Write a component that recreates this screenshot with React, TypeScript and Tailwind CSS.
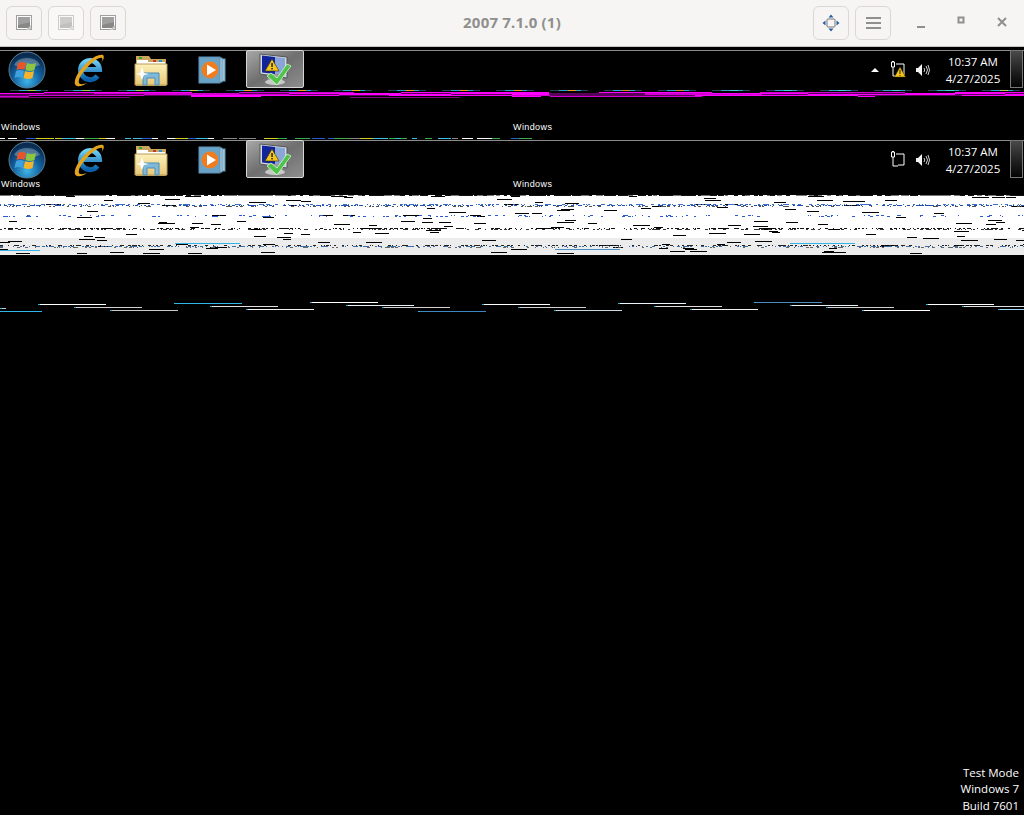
import React from "react";

// seeded noise so the glitch bands stay the same on each render
function rng(seed: number) {
  let s = seed;
  return () => {
    s = (s * 16807) % 2147483647;
    return s / 2147483647;
  };
}

function HeaderIcon({ dim }: { dim?: boolean }) {
  return (
    <svg width="16" height="16" viewBox="0 0 16 16" className={dim ? "opacity-40" : "opacity-80"}>
      <rect x="0.5" y="0.5" width="15" height="14" fill="#fff" stroke="#8a8a8a" />
      <rect x="2" y="2" width="12" height="11" fill="#6e6e6e" />
      <path d="M2 2h12v5L2 10z" fill="#8c8c8c" />
      <path d="M10 15l5-5v3l-2 2z" fill="#bbb" />
    </svg>
  );
}

function HeaderBtn({ children, dim }: { children: React.ReactNode; dim?: boolean }) {
  return (
    <div className={`w-9 h-[34px] rounded-[6px] border border-[#dbd8d3] flex items-center justify-center ${dim ? "bg-[#f9f8f7]" : "bg-[#f6f5f4]"}`}>
      {children}
    </div>
  );
}

function TitleBar() {
  return (
    <div className="h-[47px] shrink-0 bg-[#f6f5f4] border-b border-[#c8c5c0] grid grid-cols-[1fr_auto_1fr] items-center pb-[1px]">
      <div className="flex gap-[6px] pl-[6px]">
        <HeaderBtn><HeaderIcon /></HeaderBtn>
        <HeaderBtn dim><HeaderIcon dim /></HeaderBtn>
        <HeaderBtn><HeaderIcon /></HeaderBtn>
      </div>
      <div className="text-center font-['Noto_Sans',sans-serif] font-bold text-[15px] tracking-[0.2px] text-[#8f8f8d]">2007 7.1.0 (1)</div>
      <div className="flex justify-end items-center">
        <div className="flex gap-[6px]">
          <HeaderBtn>
            <svg width="18" height="18" viewBox="0 0 18 18">
              <rect x="5" y="5" width="8" height="8" rx="1" fill="#f6f5f4" stroke="#777" />
              <path d="M9 0.5l2.5 3h-5zM9 17.5l2.5-3h-5zM0.5 9l3-2.5v5zM17.5 9l-3-2.5v5z" fill="#2a5c9e" />
            </svg>
          </HeaderBtn>
          <HeaderBtn>
            <div className="flex flex-col gap-[3px]">
              <div className="w-[15px] h-[2px] bg-[#8f8f8d]" />
              <div className="w-[15px] h-[2px] bg-[#8f8f8d]" />
              <div className="w-[15px] h-[2px] bg-[#8f8f8d]" />
            </div>
          </HeaderBtn>
        </div>
        <div className="w-[133px] flex items-center pl-[25px] gap-[27px]">
          <svg width="13" height="13" viewBox="0 0 13 13"><rect x="1" y="10" width="8" height="2" fill="#8f8f8d" /></svg>
          <svg width="13" height="13" viewBox="0 0 13 13"><rect x="2.5" y="1.5" width="5" height="5" fill="none" stroke="#8f8f8d" strokeWidth="2" /></svg>
          <svg width="13" height="13" viewBox="0 0 13 13"><path d="M2 2l8 8M10 2l-8 8" stroke="#8f8f8d" strokeWidth="2" /></svg>
        </div>
      </div>
    </div>
  );
}

function StartOrb() {
  return (
    <svg width="38" height="38" viewBox="0 0 38 38">
      <defs>
        <radialGradient id="orb" cx="50%" cy="80%" r="70%">
          <stop offset="0" stopColor="#3fb4e8" />
          <stop offset="0.55" stopColor="#13609e" />
          <stop offset="1" stopColor="#0b2c50" />
        </radialGradient>
      </defs>
      <circle cx="19" cy="19" r="18" fill="url(#orb)" stroke="#5a7f96" />
      <path d="M6 14a14 11 0 0 1 26 0q-13 6-26 0z" fill="#fff" opacity="0.28" />
      <path d="M10 12q4-2 8 0l-1.500 7q-4-2-8 0z" fill="#e8552a" />
      <path d="M19 12q4 2 9 0l-1.500 7q-4 2-9 0z" fill="#8cc63f" />
      <path d="M8 20q4-2 8 0l-1.500 7q-4-2-8 0z" fill="#3fa0e0" />
      <path d="M17 20q4 2 9 0l-1.500 7q-4 2-9 0z" fill="#f7b32b" />
    </svg>
  );
}

function IeIcon() {
  return (
    <svg width="34" height="34" viewBox="0 0 34 34">
      <defs>
        <linearGradient id="ie" x1="0" y1="0" x2="0" y2="1">
          <stop offset="0" stopColor="#6fd0f5" />
          <stop offset="1" stopColor="#0a5fa8" />
        </linearGradient>
      </defs>
      <path d="M10 16.500h17.500A9.500 9.500 0 1 0 25.500 23" fill="none" stroke="url(#ie)" strokeWidth="5" />
      <path d="M31 2C25 0 12 10 5 22c-3 6-3 10 0 11 3 1 7-1 10-3-3 1-7 2-8 0-1-3 2-9 7-14C20 9 27 4 30 5c1 1 0 4-2 6 3-3 5-7 3-9z" fill="#e3a51f" />
    </svg>
  );
}

function FolderIcon() {
  return (
    <svg width="34" height="34" viewBox="0 0 34 34">
      <defs>
        <linearGradient id="fld" x1="0" y1="0" x2="0" y2="1">
          <stop offset="0" stopColor="#fdf0b8" />
          <stop offset="1" stopColor="#e9c878" />
        </linearGradient>
      </defs>
      <path d="M2 3h13l2 3h15v27H2z" fill="#c9a65c" />
      <rect x="5" y="4" width="3" height="2" fill="#3ba53b" />
      <rect x="19" y="7" width="3" height="2" fill="#c8382a" />
      <rect x="25" y="7" width="3" height="2" fill="#2a8fd8" />
      <path d="M3 7h11v2h17v2H3z" fill="#fff" />
      <path d="M1 11h32v21H1z" fill="url(#fld)" stroke="#b99a58" />
      <path d="M9 20h16v12h-4v-7h-8v7H9z" fill="#7fb8d8" stroke="#4d8db5" />
      <path d="M6 20l2-6 2 6 5 1-5 1-2 5-2-5-4-1z" fill="#fff" />
    </svg>
  );
}

function MediaIcon() {
  return (
    <svg width="28" height="28" viewBox="0 0 28 28">
      <rect x="6" y="3" width="21" height="22" fill="#9cc4dc" stroke="#6a9bb8" />
      <rect x="3" y="2" width="21" height="24" fill="#b8d6e8" stroke="#6a9bb8" />
      <rect x="1" y="1" width="21" height="26" fill="#6ba3c7" stroke="#5c92b5" />
      <circle cx="12" cy="14" r="8.500" fill="#f07c20" />
      <path d="M9 8.500l9 5.500-9 5.500z" fill="#fff" />
    </svg>
  );
}

function FlagTile() {
  return (
    <div className="w-[58px] h-[38px] self-start -mt-[1px] rounded-[2px] border border-[#d6d6d6] bg-gradient-to-br from-[#a8a8a8] via-[#6f6f6f] to-[#8e8e8e] flex items-center justify-center">
      <svg width="34" height="36" viewBox="0 0 34 36">
        <path d="M2 3l27 3v21L2 23z" fill="#d0d8e0" stroke="#555" />
        <path d="M4 4.500l13 1.500V23L4 21.500z" fill="#12249c" />
        <path d="M17 6l10 1v18l-10-2z" fill="#8aa6d8" />
        <path d="M12 23h10l3 7H9z" fill="#9a9a9a" />
        <ellipse cx="17" cy="31" rx="10" ry="3" fill="#c8c8c8" />
        <path d="M14 8l7 12H7z" fill="#f5c518" stroke="#3a3000" strokeWidth="0.600" />
        <rect x="13.300" y="12" width="1.500" height="4" fill="#222" />
        <rect x="13.300" y="17" width="1.500" height="1.500" fill="#222" />
        <path d="M9 25l4-3 6 5 10-14 4 2-14 19z" fill="#4fc24a" stroke="#d8f5d0" strokeWidth="0.800" />
      </svg>
    </div>
  );
}

function NetworkIcon({ warn }: { warn?: boolean }) {
  return (
    <svg width="16" height="17" viewBox="0 0 16 17">
      <path d="M1.500 1v5h3V1zM2.500 0v1M3.500 0v1M3 6v9H8M6 3h8v11H8" fill="none" stroke="#fff" strokeWidth="1" />
      {warn && (
        <>
          <path d="M10 6l5.500 10H4.500z" fill="#f5c518" stroke="#4a3c00" strokeWidth="0.500" />
          <rect x="9.500" y="9" width="1" height="4" fill="#222" />
          <rect x="9.500" y="14" width="1" height="1" fill="#222" />
        </>
      )}
    </svg>
  );
}

function SpeakerIcon() {
  return (
    <svg width="15" height="14" viewBox="0 0 15 14">
      <path d="M1 5h2l4-4v12l-4-4H1z" fill="#f2f2f2" />
      <path d="M9 5q1.500 2 0 4M11 3q3 4 0 8M13 2q3 5 0 10" fill="none" stroke="#cfcfcf" strokeWidth="1" />
    </svg>
  );
}

function Taskbar({ warn }: { warn?: boolean }) {
  return (
    <div className="h-[38px] shrink-0 border-t border-[#8a8a8a] flex items-center">
      <div className="w-[54px] flex justify-center"><StartOrb /></div>
      <div className="w-[70px] flex justify-center"><IeIcon /></div>
      <div className="w-[54px] flex justify-center"><FolderIcon /></div>
      <div className="w-[68px] flex justify-center"><MediaIcon /></div>
      <FlagTile />
      <div className="flex-1" />
      {warn && <div className="w-0 h-0 border-x-[4px] border-x-transparent border-b-[4px] border-b-white mr-[11px]" />}
      <NetworkIcon warn={warn} />
      <div className="w-[9px]" />
      <SpeakerIcon />
      <div className="w-[77px] text-center text-white text-[11.500px] leading-[17px] font-['Open_Sans',sans-serif] pl-[9px] mr-[3px]">
        <div>10:37 AM</div>
        <div>4/27/2025</div>
      </div>
      <div className="w-[13px] h-[38px] self-start -mt-[1px] mr-[1px] border border-[#777] bg-gradient-to-b from-[#4a4a4a] to-[#050505]" />
    </div>
  );
}

const MAGENTA: [number, number, number][] = [
  [44, 92, 148], [239, 92, 115], [401, 92, 148], [599, 92, 113], [760, 92, 145], [955, 92, 69],
  [0, 93, 44], [94, 93, 145], [289, 93, 112], [451, 93, 98], [645, 93, 67], [712, 93, 96], [905, 93, 100],
  [144, 94, 145], [339, 94, 112], [512, 94, 37], [645, 94, 117], [808, 94, 147], [1005, 94, 19],
  [29, 95, 115], [191, 95, 148], [389, 95, 123], [512, 95, 38], [695, 95, 163], [962, 95, 62],
  [0, 96, 29], [191, 96, 70], [512, 96, 29], [550, 96, 152], [858, 96, 17],
  [0, 97, 130], [350, 97, 110],
];

function MagentaBand() {
  const tints = ["#9ccf4a", "#9ccf4a", "#9ccf4a", "#c8d050", "#f0a020", "#f0a020", "#f0b020", "#f0a020", "#f0a020", "#f0a020", "#f0a020", "#d09030", "#d09030", "#40d8c8", "#40d8c8", "#40d8c8", "#40d8c8", "#40d8c8", "#b0d050"];
  const dashes = tints.map((tint, i) => {
    const x = 10 + i * 54;
    return (
      <g key={i}>
        <rect x={x} y={2} width={38} height={1} fill="#27465a" />
        <rect x={x + 9} y={2} width={22} height={1} fill="#2fa4c8" />
        <rect x={x + 18} y={2} width={8} height={1} fill={tint} />
      </g>
    );
  });
  return (
    <svg width="1024" height="10" viewBox="0 0 1024 10" className="block shrink-0">
      {dashes}
      <rect x={0} y={5} width={1024} height={3} fill="#5a005a" />
      {MAGENTA.map(([x, y, w], i) => (
        <rect key={i} x={x} y={y - 88} width={w} height={1} fill={y === 97 ? "#800080" : i % 3 === 1 ? "#d000d0" : "#ff00ff"} />
      ))}
    </svg>
  );
}

function DottedRow() {
  const r = rng(77);
  const colors = ["#fff", "#2a5bd0", "#38b04a", "#d8d020", "#3ac0e0", "#888"];
  const items = [];
  for (let x = 0; x < 520; x += 6 + Math.floor(r() * 14)) {
    items.push(<rect key={x} x={x} y={0} width={5 + Math.floor(r() * 14)} height={1} fill={colors[Math.floor(r() * colors.length)]} />);
  }
  return (
    <svg width="1024" height="1" viewBox="0 0 1024 1" className="block shrink-0">
      {items}
    </svg>
  );
}

function WindowsLabels() {
  return (
    <div className="grid grid-cols-2 w-full text-white text-[9px] tracking-[0.4px] leading-[10px] font-['Liberation_Sans',sans-serif]">
      <div className="pl-[1px]">Windows</div>
      <div className="pl-[1px]">Windows</div>
    </div>
  );
}

function WhiteBand() {
  const r = rng(4242);
  const items: React.ReactNode[] = [];
  // black dashes all over
  for (let i = 0; i < 170; i++) {
    const y = Math.floor(r() * 58) + 1;
    items.push(<rect key={`d${i}`} x={Math.floor(r() * 1024)} y={y} width={8 + Math.floor(r() * 10)} height={1} fill="#000" />);
  }
  // text rows that got squeezed
  const rows: [number, number, string][] = [[9, 0.55, "#3a6ec8"], [10, 0.7, "#1e50b4"], [11, 0.4, "#555"], [20, 0.2, "#2a5bd0"], [21, 0.2, "#2a5bd0"], [33, 0.65, "#111"], [34, 0.5, "#333"], [50, 0.6, "#222"], [51, 0.6, "#3a6ea8"], [52, 0.3, "#666"]];
  rows.forEach(([y, d, c]) => {
    for (let x = 0; x < 1024; x += 2 + Math.floor(r() * 3)) {
      if (r() < d) items.push(<rect key={`n${y}-${x}`} x={x} y={y} width={1 + Math.floor(r() * 3)} height={1} fill={c} />);
    }
  });
  // top edge dashes
  for (let x = 0; x < 1024; x += 3 + Math.floor(r() * 8)) {
    items.push(<rect key={`t${x}`} x={x} y={0} width={3 + Math.floor(r() * 8)} height={1} fill={r() < 0.6 ? "#111" : "#777"} />);
  }
  return (
    <svg width="1024" height="60" viewBox="0 0 1024 60" className="block shrink-0">
      <rect width="1024" height="43" fill="#fff" />
      <rect y="43" width="1024" height="17" fill="#ececec" />
      <rect x="175" y="48" width="65" height="1" fill="#35b4e6" />
      <rect x="0" y="55" width="40" height="1" fill="#35b4e6" />
      <rect x="555" y="54" width="65" height="1" fill="#4a90c8" />
      <rect x="790" y="48" width="65" height="1" fill="#35b4e6" />
      {items}
    </svg>
  );
}

// each entry: x, y, width, colour
const LINES: [number, number, number, string][] = [
  [38, 304, 68, "#fff"], [482, 304, 68, "#fff"], [926, 304, 68, "#fff"],
  [174, 303, 68, "#2fb6e8"], [618, 303, 68, "#e8f6fb"],
  [310, 302, 68, "#fff"], [754, 302, 68, "#4a8cc0"],
  [346, 305, 68, "#e8f0f5"], [790, 305, 68, "#e8f0f5"],
  [210, 306, 68, "#e0e0e0"], [654, 306, 68, "#e0e0e0"], [962, 306, 62, "#e0e0e0"],
  [74, 307, 68, "#d0d0d0"], [382, 307, 68, "#d0d0d0"], [518, 307, 68, "#d0d0d0"], [826, 307, 68, "#d0d0d0"],
  [0, 308, 6, "#d0d0d0"],
  [246, 309, 68, "#f0f0f0"], [690, 309, 68, "#f0f0f0"], [998, 309, 26, "#9fd8ee"],
  [110, 310, 68, "#c8c8c8"], [554, 310, 68, "#c8d8e0"], [862, 310, 68, "#fff"],
  [0, 311, 42, "#2fb6e8"], [418, 311, 68, "#3f86c0"],
];

function StrayLines() {
  return (
    <svg width="1024" height="12" viewBox="0 0 1024 12" className="block shrink-0">
      {LINES.map(([x, y, w, c], i) => (
        <g key={i}>
          <rect x={x} y={y - 301} width={w} height={1} fill={c} />
          <rect x={x} y={y - 301} width={2} height={1} fill="#35b4e6" />
        </g>
      ))}
    </svg>
  );
}

export default function App() {
  return (
    <div className="w-[1024px] h-[815px] overflow-hidden bg-black flex flex-col">
      <TitleBar />
      <div className="h-[3px] shrink-0" />
      <Taskbar warn />
      <MagentaBand />
      <div className="h-[24px] shrink-0" />
      <WindowsLabels />
      <div className="h-[6px] shrink-0" />
      <DottedRow />
      <div className="h-[1px] shrink-0" />
      <Taskbar />
      <div className="h-[1px] shrink-0" />
      <WindowsLabels />
      <div className="h-[6px] shrink-0" />
      <WhiteBand />
      <div className="h-[46px] shrink-0" />
      <StrayLines />
      <div className="flex-1 flex flex-col justify-end items-end pr-[5px] pb-[1px] text-white text-[11.500px] leading-[16.500px] text-right font-['Open_Sans',sans-serif]">
        <div>Test Mode</div>
        <div>Windows 7</div>
        <div>Build 7601</div>
      </div>
    </div>
  );
}
